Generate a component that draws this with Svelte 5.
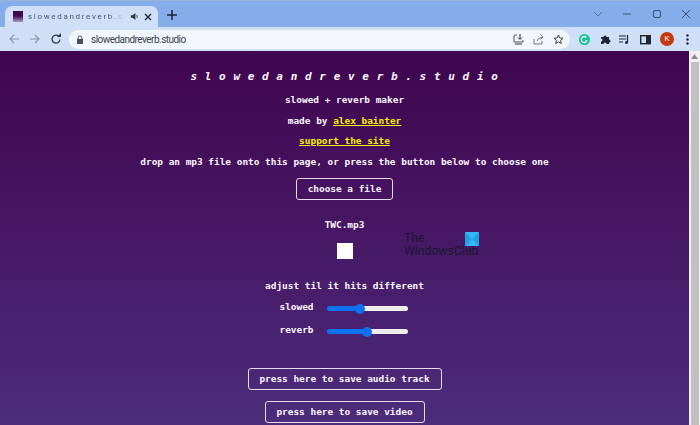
<script>
    let slowed = $state(40);
    let reverb = $state(50);
</script>

<div class="window">
    <div class="tabstrip">
        <div class="tab">
            <span class="favicon"></span>
            <span class="tabtitle">slowedandreverb.studio</span>
            <svg class="speaker" width="9" height="9" viewBox="0 0 10 10"><path d="M1 3.500h2L6 1v8L3 6.500H1z" fill="#333" /><path d="M7.500 3.500q1.200 1.500 0 3" stroke="#333" fill="none" /></svg>
            <svg class="close" width="8" height="8" viewBox="0 0 8 8"><path d="M1 1l6 6M7 1l-6 6" stroke="#222" stroke-width="1.300" /></svg>
        </div>
        <svg class="newtab" width="10" height="10" viewBox="0 0 10 10"><path d="M5 0v10M0 5h10" stroke="#1c2433" stroke-width="1.500" /></svg>
        <div class="winbtns">
            <svg width="10" height="10" viewBox="0 0 10 10"><path d="M1 3l4 4 4-4" stroke="#5c7194" fill="none" /></svg>
            <svg width="10" height="10" viewBox="0 0 10 10"><path d="M1 5h8" stroke="#3c5070" /></svg>
            <svg width="10" height="10" viewBox="0 0 10 10"><rect x="1.500" y="1.500" width="7" height="7" rx="1.500" stroke="#3c5070" fill="none" /></svg>
            <svg width="10" height="10" viewBox="0 0 10 10"><path d="M1 1l8 8M9 1l-8 8" stroke="#3c5070" /></svg>
        </div>
    </div>

    <div class="toolbar">
        <svg width="12" height="12" viewBox="0 0 12 12"><path d="M11 6H2M6 2L2 6l4 4" stroke="#8d97a6" stroke-width="1.200" fill="none" /></svg>
        <svg class="fwd" width="12" height="12" viewBox="0 0 12 12"><path d="M1 6h9M6 2l4 4-4 4" stroke="#8d97a6" stroke-width="1.200" fill="none" /></svg>
        <svg class="reload" width="12" height="12" viewBox="0 0 12 12"><path d="M10 6.500A4 4 0 1 1 8.800 3.200" stroke="#2b3240" stroke-width="1.300" fill="none" /><path d="M7 4h4V0z" fill="#2b3240" /></svg>
        <div class="omnibox">
            <svg width="8" height="9" viewBox="0 0 8 9"><rect x="1" y="4" width="6" height="5" fill="#4a4f57" /><path d="M2.200 4V2.800a1.800 1.800 0 0 1 3.600 0V4" stroke="#4a4f57" fill="none" /></svg>
            <span class="url">slowedandreverb.studio</span>
            <span class="spacer"></span>
            <svg width="11" height="11" viewBox="0 0 11 11"><path d="M4 1H2a1 1 0 0 0-1 1v6h9V6" stroke="#555" fill="none" /><path d="M7 0v5M5 3.500L7 5.500l2-2M2 10h7" stroke="#333" fill="none" /></svg>
            <svg width="11" height="11" viewBox="0 0 11 11"><path d="M1 5v5h8V7M4 7q0-3 6-4M7.500 .5L10 3 7.500 5.500" stroke="#777" fill="none" /></svg>
            <svg width="11" height="11" viewBox="0 0 11 11"><path d="M5.500 1l1.300 3 3.200.3-2.400 2.100.7 3.100-2.800-1.600L2.700 9.500l.7-3.100L1 4.300 4.200 4z" stroke="#444" fill="none" /></svg>
        </div>
        <div class="tools">
            <svg width="11" height="11" viewBox="0 0 11 11"><circle cx="5.500" cy="5.500" r="5.500" fill="#15c39a" /><path d="M7.500 3.500a3 3 0 1 0 .5 3.500H6" stroke="#fff" stroke-width="1.200" fill="none" /></svg>
            <svg width="11" height="11" viewBox="0 0 11 11"><path d="M1 3h2.500a1.500 1.500 0 0 1 3 0H9v2.500a1.500 1.500 0 0 1 0 3V10H6.500a1.500 1.500 0 0 0-3 0H1V7.500a1.500 1.500 0 0 0 0-3z" fill="#1f2430" /></svg>
            <svg class="queue" width="11" height="11" viewBox="0 0 11 11"><path d="M0 2h7M0 5h7M0 8h4" stroke="#1f2430" stroke-width="1.200" /><path d="M8.500 1v7" stroke="#1f2430" stroke-width="1.200" /><circle cx="7.500" cy="8.500" r="1.500" fill="#1f2430" /></svg>
            <svg width="11" height="11" viewBox="0 0 11 11"><rect x=".7" y="1.700" width="9.600" height="8" fill="none" stroke="#1f2430" stroke-width="1.400" /><rect x="6" y="1.700" width="4" height="8" fill="#1f2430" /></svg>
            <span class="avatar">K</span>
            <svg class="dots" width="3" height="11" viewBox="0 0 3 11"><circle cx="1.500" cy="1.500" r="1.200" fill="#1f2430" /><circle cx="1.500" cy="5.500" r="1.200" fill="#1f2430" /><circle cx="1.500" cy="9.500" r="1.200" fill="#1f2430" /></svg>
        </div>
    </div>

    <div class="viewport">
        <main class="page">
            <h1>slowedandreverb.studio</h1>
            <p class="line first">slowed + reverb maker</p>
            <p class="line">made by <a href="#top">alex bainter</a></p>
            <p class="line"><a href="#top">support the site</a></p>
            <p class="line">drop an mp3 file onto this page, or press the button below to choose one</p>
            <button class="choose">choose a file</button>
            <p class="filename">TWC.mp3</p>
            <div class="stop"></div>
            <p class="adjust">adjust til it hits different</p>
            <div class="sliders">
                <label for="slowed">slowed</label>
                <input id="slowed" type="range" bind:value={slowed} style="--fill: {slowed}%" />
                <label for="reverb">reverb</label>
                <input id="reverb" type="range" bind:value={reverb} style="--fill: {reverb}%" />
            </div>
            <button class="save">press here to save audio track</button>
            <button class="save second">press here to save video</button>

            <div class="watermark">
                <span>The<br />WindowsClub</span>
                <svg width="14" height="14" viewBox="0 0 14 14"><rect width="14" height="14" fill="#1e9fe6" /><path d="M0 0l7 7 7-7zM0 14l7-7 7 7z" fill="#37b6f1" /></svg>
            </div>
        </main>
        <div class="scrollbar">
            <svg width="7" height="5" viewBox="0 0 7 5"><path d="M3.500 0L7 5H0z" fill="#8a8a8a" /></svg>
            <div class="thumb"></div>
        </div>
    </div>
</div>

<style>
    :global(body) {
        margin: 0;
        overflow: hidden;
    }

    .window {
        display: flex;
        flex-direction: column;
        width: 700px;
        height: 425px;
        overflow: hidden;
        font-family: "Roboto", "Liberation Sans", sans-serif;
    }

    .tabstrip {
        display: flex;
        align-items: flex-end;
        height: 27px;
        padding-left: 5px;
        box-sizing: border-box;
        background: #85ade9;
        border-top: 1px solid #9db4d6;
        flex: none;
    }

    .tab {
        display: flex;
        align-items: center;
        width: 153px;
        height: 21px;
        box-sizing: border-box;
        padding: 0 9px 0 8px;
        background: #cfdff8;
        border-radius: 7px 7px 0 0;
    }

    .favicon {
        width: 10px;
        height: 11px;
        flex: none;
        background: linear-gradient(#3d0a50 45%, #a99ac4);
    }

    .tabtitle {
        width: 96px;
        flex: none;
        margin-left: 5px;
        overflow: hidden;
        white-space: nowrap;
        font-size: 8px;
        letter-spacing: 1.680px;
        color: #4d5563;
        mask-image: linear-gradient(90deg, #000 85%, transparent);
    }

    .speaker {
        margin-left: 6px;
        flex: none;
    }

    .close {
        margin-left: 4.500px;
        flex: none;
    }

    .newtab {
        margin: 0 0 7px 9px;
    }

    .winbtns {
        display: flex;
        gap: 19.500px;
        align-self: center;
        margin-left: auto;
        padding-right: 9px;
    }

    .toolbar {
        display: flex;
        align-items: center;
        height: 24px;
        padding-left: 8px;
        box-sizing: border-box;
        background: #cfdff8;
        flex: none;
    }

    .fwd {
        margin-left: 9px;
    }

    .reload {
        margin-left: 9px;
    }

    .omnibox {
        display: flex;
        align-items: center;
        gap: 9px;
        width: 501px;
        height: 19px;
        margin-left: 7px;
        padding: 0 6.500px 0 7px;
        box-sizing: border-box;
        background: #f2f6fd;
        border-radius: 10px;
    }

    .url {
        margin-left: -2px;
        font-size: 10px;
        letter-spacing: -0.530px;
        color: #40454d;
    }

    .spacer {
        flex: 1;
    }

    .tools {
        display: flex;
        align-items: center;
        gap: 10px;
        margin-left: 9px;
    }

    .queue {
        margin-left: -2px;
    }

    .avatar {
        width: 14px;
        height: 14px;
        margin: 0 -1px;
        border-radius: 50%;
        background: #c4390f;
        color: #fff;
        font-size: 8px;
        line-height: 14px;
        text-align: center;
    }

    .dots {
        margin-left: 3px;
    }

    .viewport {
        display: flex;
        flex: 1;
        min-height: 0;
    }

    .page {
        position: relative;
        flex: 1;
        display: flex;
        flex-direction: column;
        align-items: center;
        height: 374px;
        padding-top: 19px;
        box-sizing: border-box;
        background: linear-gradient(#40054f, #4d2c7c);
        color: #fdf6ff;
        font-family: "DejaVu Sans Mono", "Liberation Mono", monospace;
        font-size: 9.430px;
        font-weight: 700;
        line-height: 12px;
        text-align: center;
    }

    h1 {
        margin: 0;
        font-size: 11px;
        font-style: italic;
        font-weight: 700;
        line-height: 14px;
        letter-spacing: 7.700px;
        margin-right: -7px;
    }

    p {
        margin: 0;
    }

    .line {
        margin-top: 8.500px;
    }

    .line.first {
        margin-top: 10px;
    }

    a {
        color: #f5f000;
    }

    button {
        display: block;
        box-sizing: border-box;
        background: transparent;
        border: 1.500px solid #e8dcf0;
        border-radius: 3px;
        color: inherit;
        font: inherit;
        padding: 0;
        height: 22px;
    }

    .choose {
        width: 97px;
        margin-top: 10px;
    }

    .filename {
        margin-top: 19px;
    }

    .stop {
        width: 16px;
        height: 16px;
        margin-top: 12px;
        background: #fff;
    }

    .adjust {
        margin-top: 21px;
    }

    .sliders {
        display: grid;
        grid-template-columns: 36px 81px;
        column-gap: 12px;
        row-gap: 7px;
        align-items: center;
        margin-top: 9px;
        margin-right: 3px;
    }

    label {
        margin-bottom: 4px;
    }

    input[type="range"] {
        appearance: none;
        width: 81px;
        height: 16px;
        margin: 0;
        background: transparent;
    }

    input[type="range"]::-webkit-slider-runnable-track {
        height: 5px;
        border-radius: 3px;
        background: linear-gradient(90deg, #0c71f2 var(--fill), #f0eef2 var(--fill));
    }

    input[type="range"]::-webkit-slider-thumb {
        appearance: none;
        width: 10px;
        height: 10px;
        margin-top: -2.500px;
        border-radius: 50%;
        background: #0c71f2;
    }

    .save {
        width: 194px;
        margin-top: 28px;
    }

    .save.second {
        width: 160px;
        margin-top: 11px;
    }

    .watermark {
        position: absolute;
        left: 404px;
        top: 181px;
        width: 75px;
        font-family: "Roboto", "Liberation Sans", sans-serif;
        font-size: 12.200px;
        font-weight: 400;
        line-height: 13px;
        color: #1a1830;
        text-align: left;
    }

    .watermark span {
        display: block;
        white-space: nowrap;
    }

    .watermark svg {
        position: absolute;
        right: 0;
        top: 0;
    }

    .scrollbar {
        width: 11px;
        flex: none;
        display: flex;
        flex-direction: column;
        align-items: center;
        background: #f1f1f1;
        padding-top: 3px;
        box-sizing: border-box;
    }

    .thumb {
        width: 8px;
        flex: 1;
        margin-top: 3px;
        background: #c1c1c1;
    }
</style>
